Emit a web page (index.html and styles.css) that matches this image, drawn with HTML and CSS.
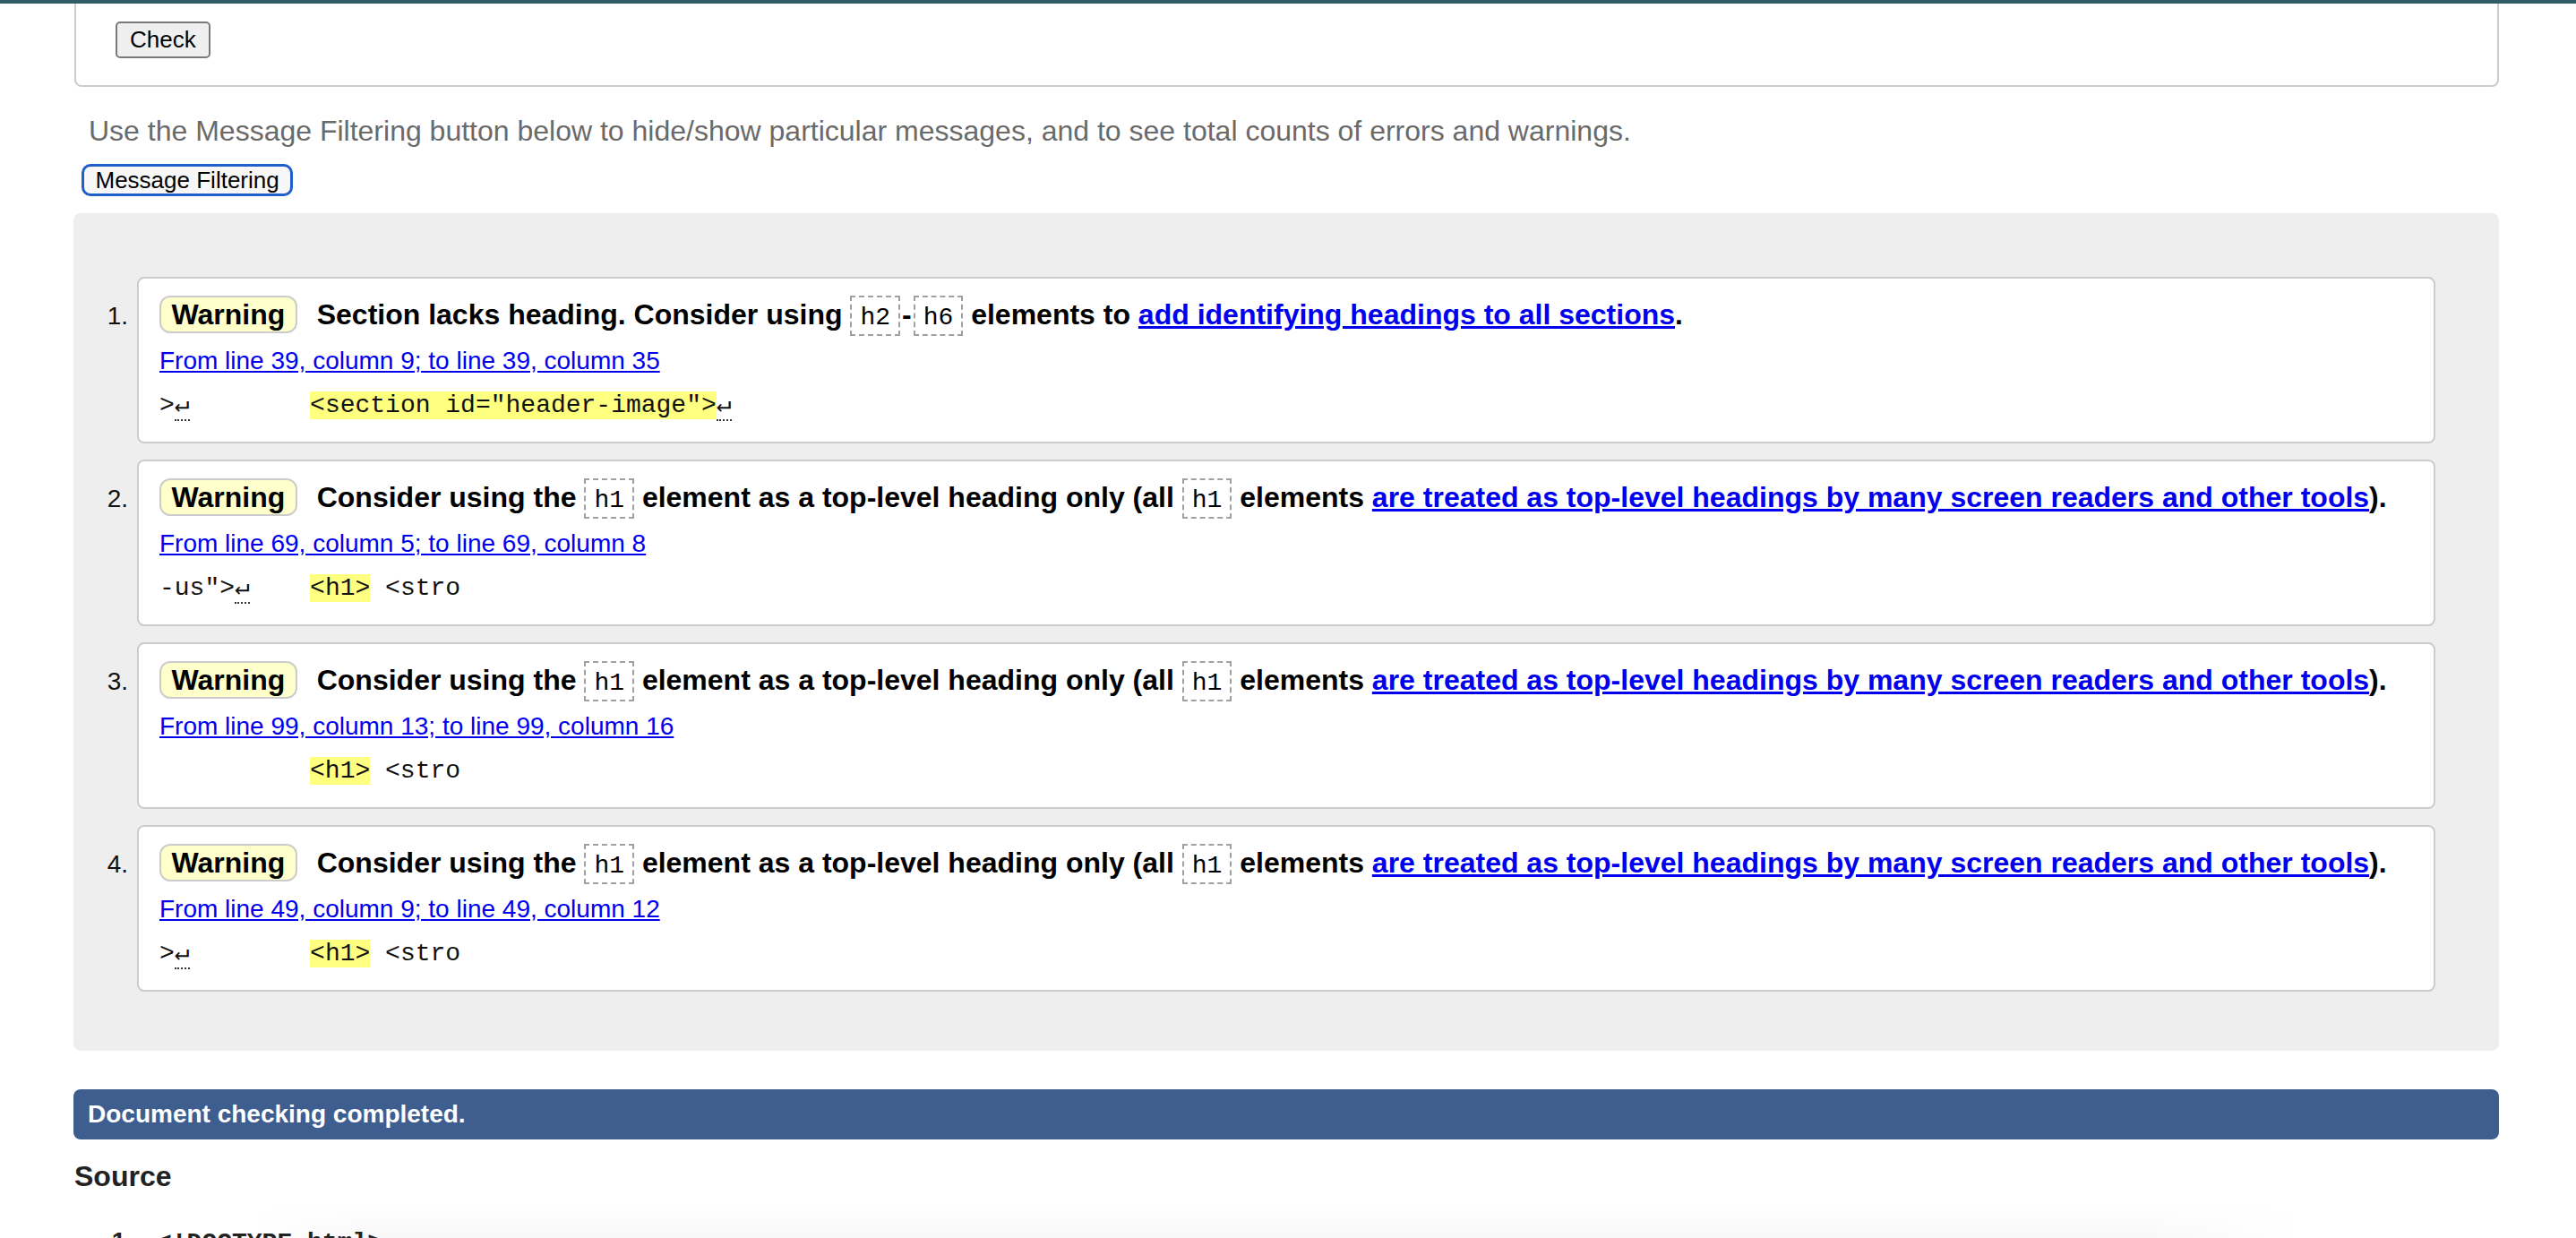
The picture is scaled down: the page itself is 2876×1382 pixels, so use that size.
FILE: index.html
```html
<!DOCTYPE html>
<html lang="en">
<head>
<meta charset="utf-8">
<title>Validation results</title>
<link rel="stylesheet" href="styles.css">
</head>
<body>
<div class="topbar"></div>
<main class="page">
  <form class="check-box">
    <button type="button" class="btn-check">Check</button>
  </form>

  <p class="intro">Use the Message Filtering button below to hide/show particular messages, and to see total counts of errors and warnings.</p>
  <button type="button" class="btn-filter">Message Filtering</button>

  <div class="results">
    <ol class="msgs">
      <li class="row">
        <span class="num">1.</span>
        <div class="card">
          <p class="msg"><span class="badge">Warning</span> <span class="msg-text">Section lacks heading. Consider using <code class="ic">h2</code><span class="dash">-</span><code class="ic">h6</code> elements to <a href="#">add identifying headings to all sections</a>.</span></p>
          <p class="loc"><a href="#">From line 39, column 9; to line 39, column 35</a></p>
          <p class="extract">&gt;<span class="lf">↵</span>        <span class="hl">&lt;section id="header-image"&gt;</span><span class="lf">↵</span></p>
        </div>
      </li>
      <li class="row">
        <span class="num">2.</span>
        <div class="card">
          <p class="msg"><span class="badge">Warning</span> <span class="msg-text">Consider using the <code class="ic">h1</code> element as a top-level heading only (all <code class="ic">h1</code> elements <a href="#">are treated as top-level headings by many screen readers and other tools</a>).</span></p>
          <p class="loc"><a href="#">From line 69, column 5; to line 69, column 8</a></p>
          <p class="extract">-us"&gt;<span class="lf">↵</span>    <span class="hl">&lt;h1&gt;</span> &lt;stro</p>
        </div>
      </li>
      <li class="row">
        <span class="num">3.</span>
        <div class="card">
          <p class="msg"><span class="badge">Warning</span> <span class="msg-text">Consider using the <code class="ic">h1</code> element as a top-level heading only (all <code class="ic">h1</code> elements <a href="#">are treated as top-level headings by many screen readers and other tools</a>).</span></p>
          <p class="loc"><a href="#">From line 99, column 13; to line 99, column 16</a></p>
          <p class="extract">          <span class="hl">&lt;h1&gt;</span> &lt;stro</p>
        </div>
      </li>
      <li class="row">
        <span class="num">4.</span>
        <div class="card">
          <p class="msg"><span class="badge">Warning</span> <span class="msg-text">Consider using the <code class="ic">h1</code> element as a top-level heading only (all <code class="ic">h1</code> elements <a href="#">are treated as top-level headings by many screen readers and other tools</a>).</span></p>
          <p class="loc"><a href="#">From line 49, column 9; to line 49, column 12</a></p>
          <p class="extract">&gt;<span class="lf">↵</span>        <span class="hl">&lt;h1&gt;</span> &lt;stro</p>
        </div>
      </li>
    </ol>
  </div>

  <div class="done">Document checking completed.</div>

  <h2 class="source-title">Source</h2>
  <ol class="listing">
    <li class="src-line"><span class="src-num">1.</span><code class="src-code">&lt;!DOCTYPE html&gt;↵</code></li>
  </ol>
</main>
</body>
</html>
```

FILE: styles.css
```css
html, body {
  margin: 0;
  padding: 0;
  background: #ffffff;
}

body {
  font-family: "Liberation Sans", Arial, Helvetica, sans-serif;
  color: #000;
  overflow: hidden;
}

.topbar {
  height: 4px;
  background: #2e5d66;
}

.page {
  padding: 0 86px 0 83px;
}

/* top form box (its top edge is scrolled off) */
.check-box {
  margin: 0;
  box-sizing: border-box;
  height: 93px;
  border: 2px solid #cccccc;
  border-top: 0;
  border-radius: 0 0 8px 8px;
  padding: 20px 0 0 44px;
}

.btn-check {
  display: block;
  height: 41px;
  padding: 0 14px;
  font-family: "Liberation Sans", Arial, sans-serif;
  font-size: 26px;
  line-height: 37px;
  color: #000;
  background: #efefef;
  border: 2px solid #7a7a7a;
  border-radius: 5px;
}

.intro {
  margin: 30px 0 0 16px;
  font-size: 32px;
  line-height: 38px;
  color: #6a6a6a;
}

.btn-filter {
  display: block;
  margin: 18px 0 0 8px;
  height: 36px;
  padding: 0 12.5px;
  font-family: "Liberation Sans", Arial, sans-serif;
  font-size: 26px;
  line-height: 30px;
  color: #000;
  background: #f7f7f7;
  border: 3px solid #1f5fc8;
  border-radius: 10px;
}

.results {
  margin-top: 19px;
  margin-left: -1px;
  background: #eeeeee;
  border-radius: 8px;
  padding: 71px 71px 66px 0;
}

.msgs {
  list-style: none;
  margin: 0;
  padding: 0;
  display: flex;
  flex-direction: column;
  gap: 18px;
}

.row {
  display: flex;
  align-items: baseline;
}

.num {
  flex: 0 0 71px;
  box-sizing: border-box;
  padding-right: 10px;
  text-align: right;
  font-size: 28px;
  color: #111;
}

.card {
  flex: 1;
  background: #ffffff;
  border: 2px solid #cccccc;
  border-radius: 8px;
  padding: 17px 24px 20px 23px;
}

.msg {
  margin: 0;
  font-size: 32px;
  line-height: 46px;
  font-weight: bold;
}

.badge {
  display: inline-block;
  padding: 0 11.5px;
  margin-right: 13px;
  line-height: 38px;
  background: #ffffcc;
  border: 2px solid #cccccc;
  border-radius: 12px;
}

.ic {
  font-family: "Liberation Mono", "Courier New", monospace;
  font-weight: normal;
  font-size: 28px;
  line-height: 30px;
  padding: 7px 9px 3px;
  border: 2px dashed #a0a0a0;
}

.dash {
  margin: 0 2px;
}

a {
  color: #0000ee;
  text-decoration: underline;
}

.loc {
  margin: 9px 0 0 0;
  font-size: 28px;
  line-height: 40px;
}

.extract {
  margin: 10px 0 0 0;
  font-family: "Liberation Mono", "Courier New", monospace;
  font-size: 28px;
  line-height: 40px;
  white-space: pre;
  color: #111;
}

.hl {
  background: #ffff80;
}

.lf {
  border-bottom: 2px dotted #333;
}

.done {
  margin-top: 43px;
  margin-left: -1px;
  height: 56px;
  box-sizing: border-box;
  padding-left: 16px;
  background: #3e5e8f;
  border-radius: 8px;
  color: #ffffff;
  font-size: 28px;
  font-weight: bold;
  line-height: 56px;
}

.source-title {
  margin: 21px 0 0 0;
  font-size: 32px;
  line-height: 40px;
  font-weight: bold;
  color: #222;
}

.listing {
  list-style: none;
  margin: 12px 0 0 0;
  padding: 21px 0 40px 0;
  background:
    linear-gradient(to bottom, #ffffff, rgba(255,255,255,0) 40px),
    linear-gradient(to right, rgba(247,247,247,0) 200px, #f7f7f7 330px, #f7f7f7 2300px, rgba(247,247,247,0) 2480px);
}

.src-line {
  display: flex;
  align-items: baseline;
  font-size: 28px;
  line-height: 40px;
}

.src-num {
  flex: 0 0 65px;
  text-align: right;
  font-weight: bold;
  color: #222;
}

.src-code {
  margin-left: 27px;
  font-family: "Liberation Mono", "Courier New", monospace;
  font-weight: bold;
  font-size: 28px;
  color: #222;
}
```
